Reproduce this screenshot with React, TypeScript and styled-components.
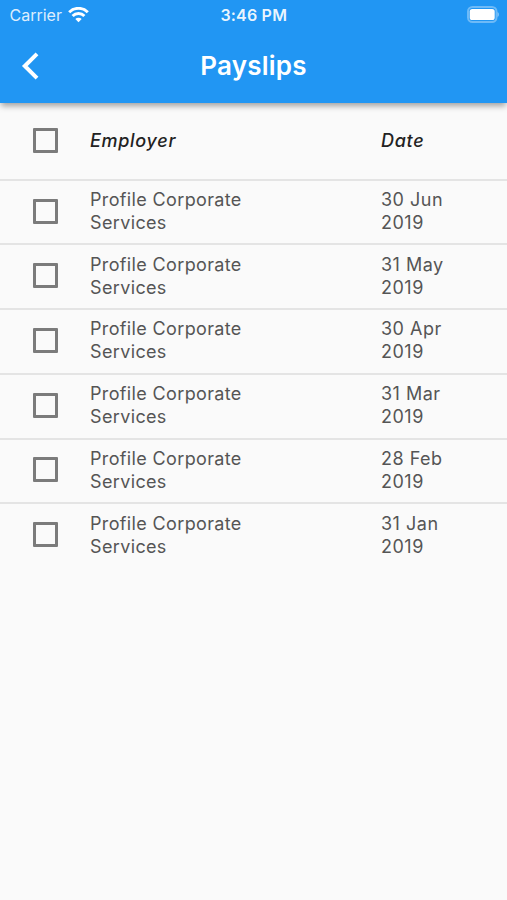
import React from "react";
import styled, { createGlobalStyle } from "styled-components";

const GlobalStyle = createGlobalStyle`
  * { box-sizing: border-box; }
  body {
    margin: 0;
    background: #fafafa;
    font-family: Inter, "Liberation Sans", sans-serif;
  }
`;

const Screen = styled.main`
  width: 100%;
  min-height: 900px;
  background: #fafafa;
  overflow: hidden;
`;

const Header = styled.header`
  height: 103px;
  background: #2196f3;
  color: #fff;
  box-shadow: 0 4px 6px -1px rgba(0, 0, 0, 0.36);
`;

const StatusBar = styled.div`
  height: 29px;
  display: grid;
  grid-template-columns: 1fr auto 1fr;
  align-items: center;
  padding: 0 8px 0 9.5px;
  font-size: 16px;
`;

const Carrier = styled.div`
  display: flex;
  align-items: center;
  gap: 6px;
  color: rgba(255, 255, 255, 0.86);
`;

const Clock = styled.div`
  font-weight: 600;
  letter-spacing: 0.2px;
  margin-right: 1px;
  color: rgba(255, 255, 255, 0.92);
`;

const Battery = styled.div`
  display: flex;
  justify-content: flex-end;
`;

const NavBar = styled.div`
  height: 73px;
  display: grid;
  grid-template-columns: 60px 1fr 60px;
  align-items: center;
`;

const BackButton = styled.button`
  width: 60px;
  height: 60px;
  padding: 0;
  border: 0;
  background: none;
  display: flex;
  align-items: center;
  justify-content: center;
`;

const Title = styled.h1`
  margin: 0;
  text-align: center;
  font-size: 26px;
  font-weight: 600;
  letter-spacing: 0.25px;
`;

const Row = styled.div<{ $heading?: boolean }>`
  height: ${(p) => (p.$heading ? 75.7 : 64.72)}px;
  display: grid;
  grid-template-columns: 57px 291px 1fr;
  align-items: center;
  padding: 0 24px ${(p) => (p.$heading ? 1 : 2)}px 33px;
  border-top: ${(p) => (p.$heading ? "0" : "2px solid #e4e4e4")};
`;

const Checkbox = styled.div`
  width: 25px;
  height: 25px;
  border: 3px solid #7b7b7b;
  border-radius: 1px;
`;

const Cell = styled.div<{ $width: number; $spacing?: number }>`
  width: ${(p) => p.$width}px;
  font-size: 18px;
  line-height: 23px;
  letter-spacing: ${(p) => p.$spacing ?? 0.5}px;
  color: #555;
`;

const HeadCell = styled(Cell)`
  font-weight: 500;
  font-style: italic;
  color: #222;
`;

const dates = ["30 Jun 2019", "31 May 2019", "30 Apr 2019", "31 Mar 2019", "28 Feb 2019", "31 Jan 2019"];

export default function App() {
  return (
    <Screen>
      <GlobalStyle />
      <Header>
        <StatusBar>
          <Carrier>
            Carrier
            <svg width="21" height="16" viewBox="0 0 21 16" fill="none" stroke="#fff" strokeWidth="3">
              <path d="M1.2 5.2 A13.2 13.2 0 0 1 19.8 5.2" />
              <path d="M4.6 9 A8.3 8.3 0 0 1 16.4 9" />
              <path d="M10.5 15.2 L7.3 12 A4.6 4.6 0 0 1 13.7 12 Z" fill="#fff" stroke="none" />
            </svg>
          </Carrier>
          <Clock>3:46 PM</Clock>
          <Battery>
            <svg width="32" height="17" viewBox="0 0 32 17">
              <rect x="1" y="1" width="28.5" height="15" rx="4.5" fill="none" stroke="#fff" strokeOpacity="0.35" strokeWidth="2" />
              <rect x="2.7" y="3" width="25" height="11" rx="2.6" fill="#fff" />
              <path d="M30.5 6 C32.5 6.8 32.5 10.2 30.5 11 Z" fill="#fff" fillOpacity="0.4" />
            </svg>
          </Battery>
        </StatusBar>
        <NavBar>
          <BackButton aria-label="Back">
            <svg width="20" height="30" viewBox="0 0 20 30" fill="none" stroke="#fff" strokeWidth="4">
              <path d="M17 2.8 L4.8 15 L17 27.2" />
            </svg>
          </BackButton>
          <Title>Payslips</Title>
        </NavBar>
      </Header>
      <Row $heading>
        <Checkbox />
        <HeadCell $width={200} $spacing={0.7}>Employer</HeadCell>
        <HeadCell $width={90} $spacing={0.7}>Date</HeadCell>
      </Row>
      {dates.map((date) => (
        <Row key={date}>
          <Checkbox />
          <Cell $width={200} $spacing={0.36}>Profile Corporate Services</Cell>
          <Cell $width={80}>{date}</Cell>
        </Row>
      ))}
    </Screen>
  );
}
